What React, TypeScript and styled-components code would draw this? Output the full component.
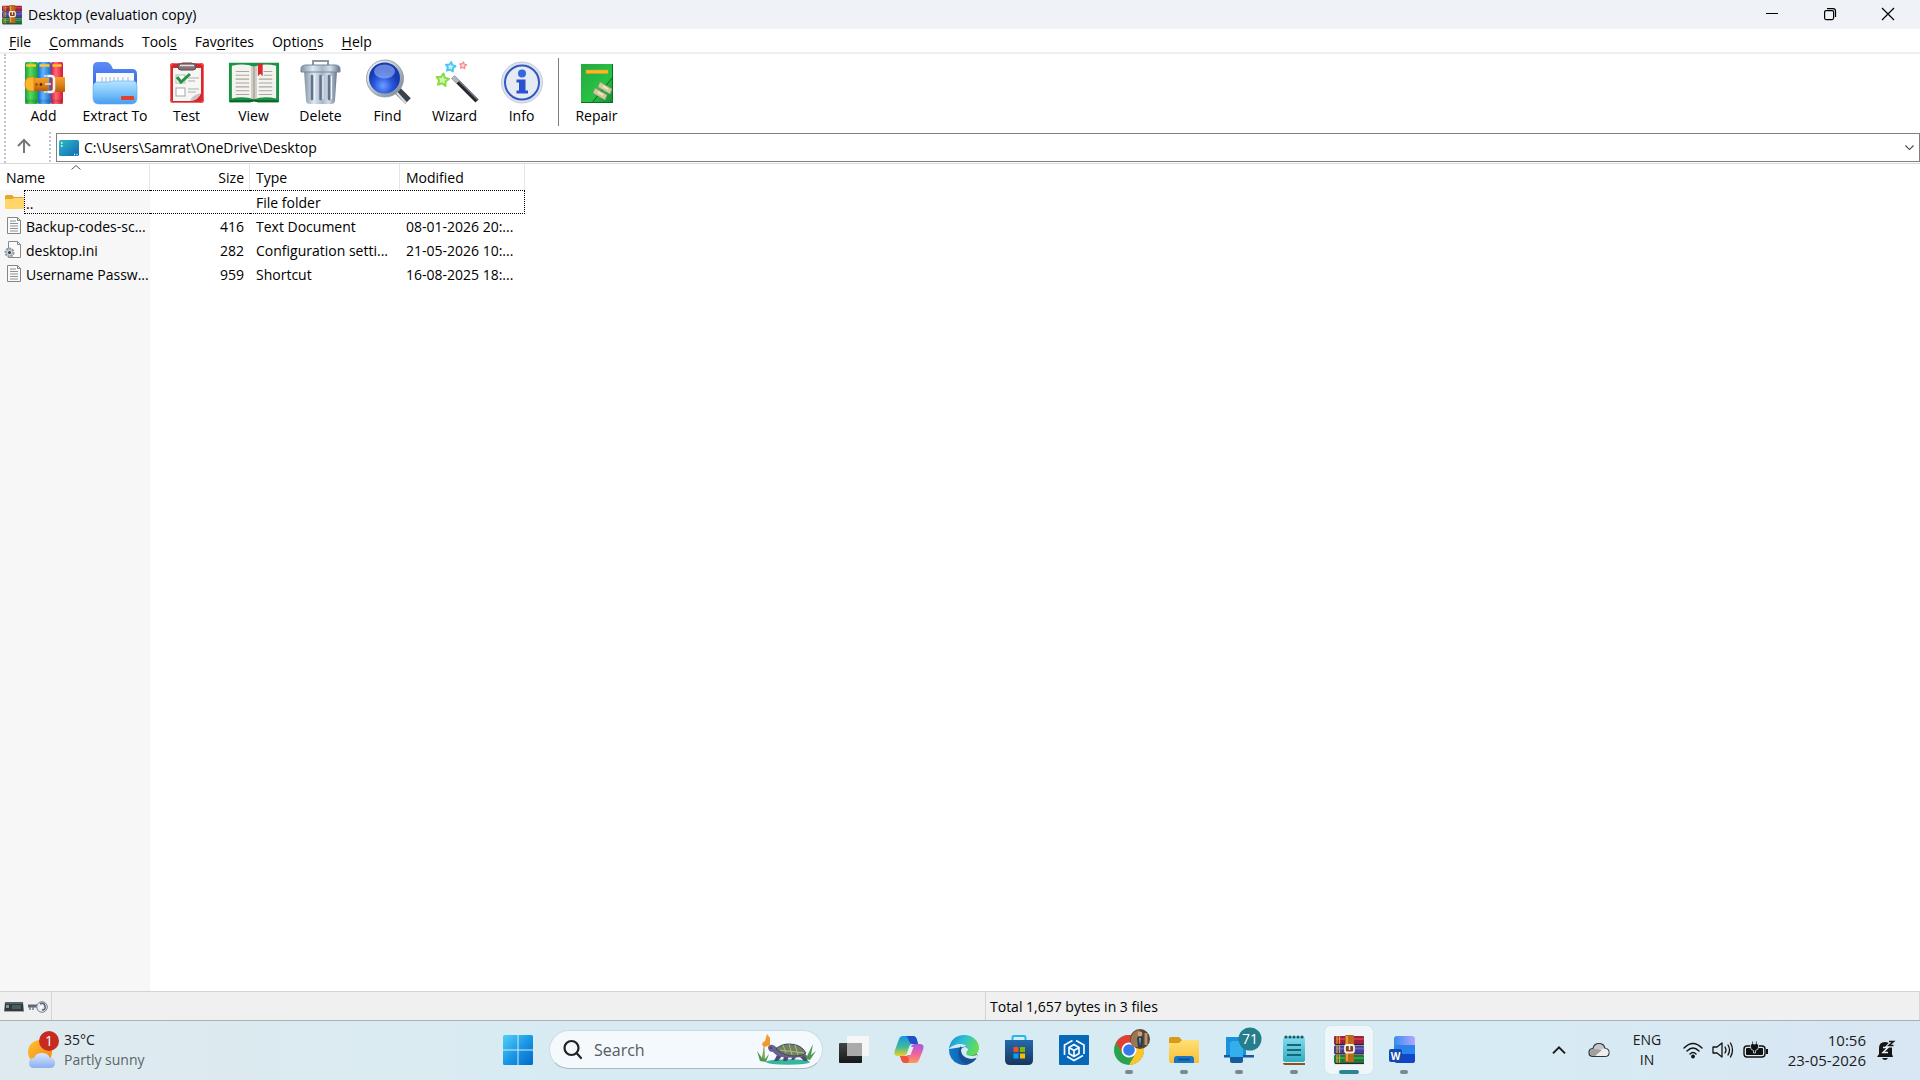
import React from "react";
import styled, { createGlobalStyle, css } from "styled-components";

const GlobalStyle = createGlobalStyle`
  *, *::before, *::after { box-sizing: border-box; }
  body { margin: 0; background: #fff; }
  body, button, input { font-family: "Open Sans", "Noto Sans", sans-serif; font-size: 14px; color: #000; }
  button { border: 0; padding: 0; margin: 0; background: none; }
  svg { display: block; flex: none; overflow: visible; }
`;

/* ---------- window frame ---------- */

const Desktop = styled.div`
  display: flex;
  flex-direction: column;
  height: 100vh;
  line-height: 20px;
`;

const TitleBar = styled.header`
  display: flex;
  align-items: center;
  height: 29px;
  padding-left: 2px;
  background: #eff3f8;
`;

const Title = styled.h1`
  flex: 1;
  margin: 0 0 0 6px;
  font-size: 14px;
  font-weight: 400;
`;

const CaptionButton = styled.button`
  display: grid;
  place-items: center;
  width: 58px;
  height: 28px;
`;

const Captions = styled.div`
  display: flex;
  align-self: flex-start;
  padding-right: 3px;
`;

const MenuBar = styled.nav`
  display: flex;
  height: 25px;
  border-bottom: 2px solid #f0f0f0;
`;

const MenuItem = styled.button`
  padding: 2px 9px 0;
  line-height: 21px;
  u { text-underline-offset: 2px; }
`;

/* ---------- toolbar ---------- */

const dottedGrip = css`
  border-left: 2px dotted #c4c4c4;
`;

const Bars = styled.div`
  display: flex;
  flex-direction: column;
  margin-left: 4px;
  ${dottedGrip}
`;

const Toolbar = styled.div`
  display: flex;
  align-items: stretch;
  height: 76px;
  padding-left: 4px;
`;

const ToolButton = styled.button<{ $wide?: boolean }>`
  display: flex;
  flex-direction: column;
  align-items: center;
  width: ${(p) => (p.$wide ? 76 : 67)}px;
  padding-top: 6px;
  line-height: 20px;
  white-space: nowrap;
`;

const ToolDivider = styled.span`
  width: 1px;
  margin: 4px 4px 4px 3px;
  background: #7d7d7d;
`;

const AddressRow = styled.div`
  display: flex;
  align-items: flex-end;
  height: 33px;
  padding-bottom: 1px;
`;

const UpButton = styled.button`
  display: grid;
  place-items: center;
  width: 36px;
  height: 32px;
`;

const AddressGrip = styled.span`
  height: 30px;
  margin: 0 5px 0 7px;
  ${dottedGrip}
`;

const AddressBox = styled.label`
  display: flex;
  flex: 1;
  align-items: center;
  height: 29px;
  padding: 0 5px 0 2px;
  border: 1px solid #808080;
  background: #fff;
`;

const AddressInput = styled.input`
  flex: 1;
  min-width: 0;
  margin-left: 5px;
  padding: 0;
  border: 0;
  outline: 0;
  background: none;
`;

const DropButton = styled.button`
  color: #444;
`;

/* ---------- file list ---------- */

const FileArea = styled.main`
  flex: 1;
  min-height: 0;
  border-top: 1px solid #d9d9d9;
  background: linear-gradient(to right, #f7f7f7 150px, #fff 150px);
`;

const FileTable = styled.table`
  width: 525px;
  table-layout: fixed;
  border-collapse: separate;
  border-spacing: 0;
`;

const HeadCell = styled.th<{ $right?: boolean; $width: number }>`
  position: relative;
  width: ${(p) => p.$width}px;
  height: 26px;
  padding: ${(p) => (p.$right ? "2px 5px 0" : "2px 6px 0")};
  border-right: 1px solid #e5e5e5;
  background: #fff;
  font-weight: 400;
  text-align: ${(p) => (p.$right ? "right" : "left")};
`;

const SortMark = styled.svg`
  position: absolute;
  left: 50%;
  top: 1px;
  margin-left: -4px;
`;

const Cell = styled.td<{ $right?: boolean; $focus?: boolean }>`
  height: 24px;
  padding: 2px 6px 0;
  text-align: ${(p) => (p.$right ? "right" : "left")};
  white-space: nowrap;
  ${(p) =>
    p.$focus &&
    css`
      border: 1px dotted #000;
      border-width: 1px 0;
      &:last-child { border-right-width: 1px; }
    `}
`;

const NameCell = styled.td`
  height: 24px;
  padding: 0 0 0 5px;
  white-space: nowrap;
`;

const NameWrap = styled.span`
  display: flex;
  align-items: center;
`;

const FileName = styled.span<{ $focus?: boolean }>`
  flex: 1;
  height: 24px;
  padding: 2px 0 0 2px;
  line-height: 22px;
  ${(p) =>
    p.$focus &&
    css`
      border: 1px dotted #000;
      border-right: 0;
      padding-left: 1px;
    `}
`;

const StatusBar = styled.footer`
  display: flex;
  height: 30px;
  border-top: 1px solid #d4d4d4;
  border-bottom: 1px solid #a9b1b5;
  background: #f0f0f0;
`;

const StatusIcons = styled.div`
  display: flex;
  align-items: center;
  gap: 4px;
  width: 52px;
  padding: 2px 0 0 4px;
  border-right: 1px solid #d4d4d4;
`;

const StatusCell = styled.div`
  flex: 1;
  padding-left: 4px;
  border-right: 1px solid #d4d4d4;
  line-height: 29px;
`;

/* ---------- taskbar ---------- */

const Taskbar = styled.footer`
  display: grid;
  grid-template-columns: 1fr auto 1fr;
  align-items: center;
  height: 59px;
  padding-bottom: 2px;
  background: linear-gradient(to right, #dfeaee, #d8ebf3 30%, #d7ebf4 80%, #d9e6f3);
`;

const Weather = styled.button`
  display: flex;
  align-items: center;
  gap: 5px;
  justify-self: start;
  padding-left: 26px;
  text-align: left;
  line-height: 20px;
`;

const WeatherText = styled.span`
  display: flex;
  flex-direction: column;
  color: #1b1b1b;
  span + span { color: #5c6468; }
`;

const Apps = styled.div`
  display: flex;
  align-items: center;
  gap: 7px;
  padding-left: 2px;
`;

const AppButton = styled.button<{ $state?: "running" | "active" }>`
  position: relative;
  display: grid;
  place-items: center;
  width: 48px;
  height: 48px;
  border-radius: 5px;
  ${(p) =>
    p.$state &&
    css`
      &::after {
        content: "";
        position: absolute;
        bottom: 0;
        left: 50%;
        width: ${p.$state === "active" ? 20 : 8}px;
        height: 4px;
        border-radius: 2px;
        background: ${p.$state === "active" ? "#2b8394" : "#7d878d"};
        transform: translateX(-50%);
      }
    `}
  ${(p) =>
    p.$state === "active" &&
    css`
      background: #eff6fa;
      box-shadow: 0 0 1px #a9bcc5;
    `}
`;

const SearchBox = styled.label`
  display: flex;
  align-items: center;
  width: 274px;
  height: 39px;
  padding: 0 6px 0 13px;
  border: 1px solid #cbdbe3;
  border-bottom-color: #aab8c0;
  border-radius: 20px;
  background: #f3f9fc;
`;

const SearchInput = styled.input`
  flex: 1;
  min-width: 0;
  margin-left: 11px;
  padding: 0;
  border: 0;
  outline: 0;
  background: none;
  font-size: 16px;
  &::placeholder { color: #555b5f; opacity: 1; }
`;

const Tray = styled.div`
  display: flex;
  align-items: center;
  justify-self: end;
  padding-right: 25px;
  color: #1b1b1b;
`;

const TrayButton = styled.button<{ $width: number }>`
  display: flex;
  align-items: center;
  justify-content: center;
  gap: 9px;
  width: ${(p) => p.$width}px;
  height: 40px;
  line-height: 20px;
  color: #1b1b1b;
`;

const Clock = styled.button`
  width: 89px;
  margin-right: 11px;
  text-align: right;
  font-size: 15px;
  line-height: 20px;
  color: #1b1b1b;
`;

/* ---------- toolbar drawings ---------- */

const AddIcon = () => (
  <svg width="42" height="46" viewBox="0 0 42 46">
    <defs>
      {[["ag", "#1c9b3f", "#55dc5b"], ["ab", "#1769cf", "#65b6ff"], ["ar", "#d51736", "#ff6b78"]].map(([id, a, b]) => (
        <linearGradient id={id} key={id}>
          <stop stopColor={a} /><stop offset=".4" stopColor={b} /><stop offset="1" stopColor={a} />
        </linearGradient>
      ))}
      <linearGradient id="abelt" x2="0" y2="1"><stop stopColor="#f5a02a" /><stop offset=".5" stopColor="#e0851c" /><stop offset="1" stopColor="#b75a08" /></linearGradient>
    </defs>
    <rect x="2" y="2" width="13" height="42" rx="1.500" fill="url(#ag)" />
    <rect x="15" y="2" width="13" height="42" rx="1.500" fill="url(#ab)" />
    <rect x="28" y="2" width="12" height="42" rx="1.500" fill="url(#ar)" />
    <path d="M3 5.500h10M16.500 5.500h10M29.500 5.500h9" stroke="#ffc928" strokeWidth="2.500" />
    <path d="M3 41h11M16 41h11M29 41h10" stroke="#0002" strokeWidth="3" />
    <path d="M8 18h18v13H8z" fill="url(#abelt)" />
    <path d="M11 17v14H7q-5-1-5-7t5-7z" fill="#ffb52b" stroke="#d98413" strokeWidth=".8" />
    <rect x="32" y="17" width="10" height="15" rx="1" fill="url(#abelt)" />
    <path d="M24 16h4q3 0 3 3v10q0 3-3 3h-4" fill="none" stroke="#f4f4f4" strokeWidth="2.500" />
    <path d="M21 16h4M21 32h4M22 24h6" stroke="#cfcfcf" strokeWidth="2" />
    <circle cx="18" cy="24.500" r="1.400" fill="#5d2b00" />
    <circle cx="13.500" cy="24.500" r="1.200" fill="#8b4a0a" />
  </svg>
);

const ExtractIcon = () => (
  <svg width="46" height="46" viewBox="0 0 46 46">
    <defs>
      <linearGradient id="eb" x2="0" y2="1"><stop stopColor="#5c8cf6" /><stop offset="1" stopColor="#245cdb" /></linearGradient>
      <linearGradient id="ef" x2="0" y2="1"><stop stopColor="#b5e5ff" /><stop offset=".5" stopColor="#7dc4fb" /><stop offset="1" stopColor="#479df0" /></linearGradient>
    </defs>
    <path d="M1 7q0-5 5-5h8q3 0 5 3l2 4h19q5 0 5 5v21H1z" fill="url(#eb)" />
    <rect x="4" y="13" width="38" height="16" fill="#f7fbff" />
    <path d="M10 17v6M14 17v6M18 17v6M22 17v6M26 17v6M31 17v6M36 17v6" stroke="#c3ced9" strokeWidth="1.500" />
    <path d="M1 27q0-5 5-5h10q3 0 5-1h20q4 0 4 4v13q0 6-6 6H7q-6 0-6-6z" fill="url(#ef)" stroke="#5aa9ee" strokeWidth=".6" />
    <rect x="29" y="36" width="13" height="4" rx="1" fill="#e2402f" />
  </svg>
);

const TestIcon = () => (
  <svg width="38" height="46" viewBox="0 0 38 46">
    <rect x="2" y="3" width="34" height="40" rx="3" fill="#d9262c" />
    <rect x="2.500" y="3.500" width="33" height="39" rx="3" fill="none" stroke="#ef6c68" />
    <path d="M5 8h28v25q-3 7-11 8H5z" fill="#f6f6f4" />
    <path d="M22 41q2-6 11-8-2 7-11 8z" fill="#c4c4c4" />
    <path d="M10 4h3l1-1h10l1 1h3v3q0 3-3 3H13q-3 0-3-3z" fill="#857276" stroke="#5f4246" />
    <path d="M12 5.500h14" stroke="#e8dfe0" strokeWidth="1.500" />
    <rect x="8" y="15" width="9" height="8" fill="#fff" stroke="#b5b5b5" />
    <rect x="8" y="28" width="9" height="8" fill="#fff" stroke="#a5a5a5" />
    <path d="M9 17l4 5 9-8" fill="none" stroke="#239443" strokeWidth="3" />
    <path d="M20 18h11M20 21h7M20 29h11M20 32h8" stroke="#adadad" />
  </svg>
);

const ViewIcon = () => (
  <svg width="52" height="46" viewBox="0 0 54 46">
    <path d="M1 2h52v41H31l-4-1-4 1H1z" fill="#189344" />
    <path d="M2 42h21l4-1 4 1h21" fill="none" stroke="#0a6329" strokeWidth="2" />
    <path d="M4 5q13-3 23 1 10-4 23-1v34q-13-3-23 1-10-4-23-1z" fill="#f5f3ef" />
    <path d="M24 5l3 1 3-1v34l-3 1-3-1z" fill="#aba7a0" opacity=".5" />
    <path d="M27 6v34" stroke="#887f75" strokeWidth=".8" />
    <path d="M8 11h14M8 15h14M8 19h14M8 23h14M8 27h14M8 31h14M8 35h14M32 19h14M32 23h14M32 27h14M32 31h14M32 35h14M37 11h9M37 15h9" stroke="#aaa6a2" strokeWidth="1.100" />
    <path d="M31 3h5v13l-2.500-2.500L31 16z" fill="#d52b2b" />
  </svg>
);

const DeleteIcon = () => (
  <svg width="42" height="46" viewBox="0 0 42 46">
    <defs><linearGradient id="db"><stop stopColor="#8291a4" /><stop offset=".3" stopColor="#dfe8f1" /><stop offset=".55" stopColor="#a7b7ca" /><stop offset=".75" stopColor="#d4dde7" /><stop offset="1" stopColor="#64758a" /></linearGradient></defs>
    <path d="M13 5V1h15v4" fill="none" stroke="#8d98a5" strokeWidth="2" />
    <path d="M4 11h33l-2 29q0 4-4 4H10q-4 0-4-4z" fill="url(#db)" />
    <path d="M12 16v23M20.500 16v23M29 16v23" stroke="#60758c" strokeWidth="2.500" strokeLinecap="round" />
    <path d="M14.500 16v23M23 16v23M31.500 16v23" stroke="#f2f6fa" />
    <path d="M1 9q0-4 5-4h29q5 0 5 4v3H1z" fill="url(#db)" stroke="#77879a" />
  </svg>
);

const FindIcon = () => (
  <svg width="46" height="46" viewBox="0 0 46 46">
    <defs>
      <radialGradient id="fi" cx=".45" cy=".75"><stop stopColor="#6e9dff" /><stop offset=".6" stopColor="#2857dd" /><stop offset="1" stopColor="#163bb0" /></radialGradient>
      <linearGradient id="fr" x2="1" y2="1"><stop stopColor="#fff" /><stop offset="1" stopColor="#73808f" /></linearGradient>
    </defs>
    <path d="M32 30l11 11" stroke="#3c4048" strokeWidth="8" />
    <path d="M31 32l10 11" stroke="#d6dce2" strokeWidth="2.500" />
    <circle cx="20" cy="18.500" r="18.500" fill="url(#fr)" stroke="#8490a0" strokeWidth=".8" />
    <circle cx="19.500" cy="18" r="15.500" fill="url(#fi)" />
    <ellipse cx="19.500" cy="11.500" rx="10.500" ry="7" fill="#a9c5ff" opacity=".55" />
  </svg>
);

const star = (cx: number, cy: number, r: number) =>
  Array.from({ length: 10 }, (_, i) => {
    const a = (i * Math.PI) / 5 - Math.PI / 2 + 0.15;
    const d = i % 2 ? r * 0.5 : r;
    return `${(cx + d * Math.cos(a)).toFixed(1)},${(cy + d * Math.sin(a)).toFixed(1)}`;
  }).join(" ");

const WizardIcon = () => (
  <svg width="46" height="46" viewBox="0 0 46 46">
    <g strokeLinejoin="round">
      <polygon points={star(10.5, 20, 6.6)} fill="#d4f7ae" stroke="#86dd48" strokeWidth="2" />
      <polygon points={star(18.5, 7, 5.2)} fill="#c4f4ff" stroke="#4cc5f2" strokeWidth="1.800" />
      <polygon points={star(31, 5.5, 3.6)} fill="#ffd9d9" stroke="#f58a8e" strokeWidth="1.200" />
    </g>
    <path d="M21 17l24 24" stroke="#25282d" strokeWidth="4.500" />
    <path d="M22.500 16.500l23 23" stroke="#7b7f86" strokeWidth="1.200" />
    <path d="M21 17l5 5" stroke="#b4b7bb" strokeWidth="4.500" />
  </svg>
);

const InfoIcon = () => (
  <svg width="44" height="46" viewBox="0 0 44 46">
    <circle cx="22" cy="22.500" r="20.500" fill="#dde3ec" stroke="#c3cbd7" />
    <circle cx="22" cy="22.500" r="17" fill="#e6ebf3" stroke="#3159c3" strokeWidth="2" />
    <circle cx="22" cy="13.500" r="4" fill="#3268df" />
    <path d="M16.500 19.500h9v11h2.500v3H16.500v-3H19v-8h-2.500z" fill="#2953cc" />
  </svg>
);

const RepairIcon = () => (
  <svg width="34" height="46" viewBox="0 0 34 46">
    <defs><linearGradient id="rp" x2="1" y2="1"><stop stopColor="#24a943" /><stop offset=".6" stopColor="#27c243" /><stop offset="1" stopColor="#128a31" /></linearGradient></defs>
    <rect x="1" y="4" width="32" height="39" fill="url(#rp)" />
    <path d="M32.500 4v39M1 42.500h32" stroke="#087023" />
    <rect x="6" y="10" width="22" height="3.500" fill="#f7b92c" stroke="#d99c16" strokeWidth=".6" />
    <path d="M33 17L12 43" stroke="#086525" />
    <path d="M20 22l12 7-2 5-12-7zM15 28l12 7-2 5-12-7z" fill="#d6c8a4" stroke="#a0926f" strokeWidth=".8" strokeDasharray="2 1" />
    <path d="M23 26l5 3M18 32l5 3" stroke="#f1e7c9" strokeWidth="2" />
  </svg>
);

/* ---------- small drawings ---------- */

const RarLogo = ({ size }: { size: number }) => (
  <svg width={size} height={size} viewBox="0 0 30 30">
    {[["#a02040", "#c93a4e", 1], ["#43409c", "#6a60c4", 10.5], ["#1b7a38", "#36a249", 20]].map(([dark, light, y]) => (
      <g key={String(y)}>
        <rect x="0" y={Number(y)} width="30" height="8.500" rx="1" fill={String(dark)} />
        <path d={`M2 ${Number(y) + 3}h28`} stroke={String(light)} strokeWidth="2" />
        <path d={`M3 ${y}v8M5.500 ${y}v8`} stroke="#d9a52d" strokeWidth="1.200" />
        <path d={`M1 ${Number(y) + 8.5}h29`} stroke="#38232d" strokeWidth="1.200" />
      </g>
    ))}
    <rect x="11" y="0" width="9" height="27" rx="1" fill="#b9681c" />
    <path d="M13 1v25" stroke="#e79c35" strokeWidth="2" />
    <rect x="11" y="10" width="9" height="7.500" rx="2" fill="#834018" stroke="#f4eee4" strokeWidth="1.800" />
    <path d="M15.500 10v5" stroke="#eee" strokeWidth="1.500" />
  </svg>
);

const FolderIcon = () => (
  <svg width="19" height="16" viewBox="0 0 19 16">
    <path d="M0 2.500Q0 1 1.500 1H7l2 2h8.500Q19 3 19 4.500V8H0z" fill="#e5a52a" />
    <path d="M0 6q0-1 1-1h6l2-1h9q1 0 1 1v9q0 1-1 1H1q-1 0-1-1z" fill="#ffd667" />
  </svg>
);

const DocIcon = () => (
  <svg width="19" height="20" viewBox="0 0 19 20">
    <path d="M2.500 1.500h10l3 3v13h-13z" fill="#f9f9f9" stroke="#858585" />
    <path d="M12.500 1.500v3h3" fill="none" stroke="#858585" />
    <path d="M5 5h6M5 7.500h8M5 10h8M5 12.500h8M5 15h8" stroke="#8d9499" />
  </svg>
);

const IniIcon = () => (
  <svg width="19" height="20" viewBox="0 0 19 20">
    <path d="M3.500 1.500h9l3 3v13h-12z" fill="#fafafa" stroke="#8a8a8a" />
    <path d="M12.500 1.500v3h3" fill="none" stroke="#8a8a8a" />
    <circle cx="4.500" cy="12.500" r="4" fill="#c9d1d6" stroke="#8c969d" strokeWidth="2" strokeDasharray="2 1" />
    <circle cx="4.500" cy="12.500" r="1.500" fill="#333f49" />
  </svg>
);

const DesktopIcon = () => (
  <svg width="20" height="16" viewBox="0 0 20 16">
    <defs><linearGradient id="dk" x2="1" y2="1"><stop stopColor="#29bcc9" /><stop offset="1" stopColor="#1268b4" /></linearGradient></defs>
    <rect width="20" height="16" rx="1.500" fill="url(#dk)" />
    <path d="M2 3h1.500M2 6h1.500M15 14.500h1M17.500 14.500h1" stroke="#fff" strokeWidth="1.500" />
  </svg>
);

const DriveIcon = () => (
  <svg width="20" height="10" viewBox="0 0 20 10">
    <path d="M1 0h18l1 9.500H0z" fill="#59636b" />
    <rect x="1" y="2" width="18" height="7" fill="#303a3f" />
    <rect x="2" y="3" width="3" height="3" fill="#819394" /><path d="M8 3h9v4H8z" fill="#4a5b5d" />
  </svg>
);

const KeyIcon = () => (
  <svg width="20" height="12" viewBox="0 0 20 12">
    <path d="M0 5h10" stroke="#5e6870" strokeWidth="3" /><path d="M2 6v3M5 6v3" stroke="#778088" strokeWidth="1.500" />
    <circle cx="14" cy="6" r="5.300" fill="#e5eaf2" stroke="#75818d" />
    <path d="M12 3q4-2 5 2t-3 4" fill="none" stroke="#53606c" strokeWidth="1.500" />
    <circle cx="13" cy="6" r="1.500" fill="#fff" />
  </svg>
);

const WeatherIcon = () => (
  <svg width="33" height="38" viewBox="0 0 33 38">
    <defs>
      <linearGradient id="sun" x2="1" y2="1"><stop stopColor="#ffc22c" /><stop offset="1" stopColor="#f2831c" /></linearGradient>
      <linearGradient id="wcl" x2="0" y2="1"><stop stopColor="#dbe8ff" /><stop offset="1" stopColor="#8baef0" /></linearGradient>
    </defs>
    <circle cx="14" cy="21" r="12" fill="url(#sun)" />
    <path d="M8 37q-5 0-5-5t5-5q2-5 8-5t8 5q5 0 5 5t-5 5z" fill="url(#wcl)" />
    <circle cx="23" cy="10" r="10" fill="#c62a20" />
    <text x="23" y="15" textAnchor="middle" fontSize="14" fill="#fff">1</text>
  </svg>
);

const Turtle = () => (
  <svg width="60" height="32" viewBox="0 0 60 32">
    <ellipse cx="32" cy="28" rx="22" ry="2.800" fill="#35b79e" />
    <path d="M4 27L1 17l5 7 2-12 1 13 4-5-3 8zM50 25l-3-8 4 5 6-12-2 11 5-4-6 9z" fill="#4f9850" />
    <path d="M22 19l-4 8h4l4-5zM28 22l-1 5h4l2-5zM42 21l6 6h4l-4-7zM37 22l-2 4h3l3-4z" fill="#4e4a72" />
    <path d="M12 13q1-3 5-2l8 5 22 4 4 2q-12 3-25 1-6-1-9-5-5 0-5-5z" fill="#696290" />
    <path d="M20 15q5-5 13-5 12 0 17 9-3 3-12 3-10 0-18-7z" fill="#6f8361" stroke="#3f4a5a" />
    <path d="M27 11l3 8M33 10l3 11M39 11l3 10M24 16l24 3" stroke="#b9bd83" strokeWidth=".9" />
    <path d="M6 11q0-3 3-4l2-7 3 4v7l-5 2z" fill="#f29a2e" /><path d="M8 11v14" stroke="#c3a56a" /><circle cx="15" cy="14" r=".8" fill="#222" />
  </svg>
);

const SearchIcon = () => (
  <svg width="20" height="20" viewBox="0 0 20 20" fill="none" stroke="#222" strokeWidth="2.200" strokeLinecap="round"><circle cx="8.500" cy="8" r="7" /><path d="M13.500 13l4.500 5" /></svg>
);

const StartIcon = () => (
  <svg width="30" height="30" viewBox="0 0 30 30">
    <defs><linearGradient id="st" x1="0" y1="0" x2="30" y2="30" gradientUnits="userSpaceOnUse"><stop stopColor="#54d0fb" /><stop offset=".5" stopColor="#1b98e5" /><stop offset="1" stopColor="#006bc9" /></linearGradient></defs>
    <path d="M1.500 0H14.500V14.500H0V1.500Q0 0 1.500 0M15.500 0h13Q30 0 30 1.500v13H15.500zM0 15.500h14.500V30h-13Q0 30 0 28.500zM15.500 15.500H30v13q0 1.500-1.500 1.500h-13z" fill="url(#st)" />
  </svg>
);

const TaskViewIcon = () => (
  <svg width="30" height="30" viewBox="0 0 30 30">
    <defs><linearGradient id="tv" x2="0" y2="1"><stop stopColor="#444" /><stop offset="1" stopColor="#171717" /></linearGradient></defs>
    <rect x="0" y="8" width="23" height="20" rx="1" fill="url(#tv)" />
    <rect x="8" y="1" width="22" height="20" rx="1" fill="#f6f6f6" />
    <path d="M8 8h15v13H8z" fill="#aaa" />
  </svg>
);

const CopilotIcon = () => (
  <svg width="30" height="30" viewBox="0 0 30 30">
    <defs>
      <linearGradient id="cpa" x2="0" y2="1"><stop stopColor="#1695e8" /><stop offset=".55" stopColor="#42b99a" /><stop offset="1" stopColor="#f0cf27" /></linearGradient>
      <linearGradient id="cpb" x2="0" y2="1"><stop stopColor="#a55bdd" /><stop offset=".5" stopColor="#ec62a2" /><stop offset="1" stopColor="#ff9a54" /></linearGradient>
    </defs>
    <path d="M9 1h10q3 0 4 4l1 4h-6q-2 0-3 3l-2 6q-1 3-4 3H4q-5 0-3-6l4-11q1-3 4-3z" fill="url(#cpa)" />
    <path d="M16 1h3q3 0 4 4l1 4h-6q-2 0-3-3-1-4-3-5z" fill="#214ec7" />
    <path d="M21 28H11q-3 0-4-4l-1-3h6q2 0 3-3l2-6q1-3 4-3h5q5 0 3 6l-4 10q-1 3-4 3z" fill="url(#cpb)" />
    <path d="M14 28h-3q-3 0-4-4l-1-3h6q2 0 3 3 0 3-1 4z" fill="#ee553a" />
    <path d="M16.500 12h3l-3 8h-4z" fill="#e6f1f6" />
  </svg>
);

const EdgeIcon = () => (
  <svg width="30" height="30" viewBox="0 0 30 30">
    <defs>
      <linearGradient id="ed" x2="1" y2=".4"><stop stopColor="#168ad8" /><stop offset=".5" stopColor="#2cc0d4" /><stop offset="1" stopColor="#66dc55" /></linearGradient>
      <linearGradient id="ee" x2="1"><stop stopColor="#107bd0" /><stop offset="1" stopColor="#124b8c" /></linearGradient>
    </defs>
    <path d="M0 14A15 15 0 0 0 27 24l2-4-9-9z" fill="url(#ee)" />
    <path d="M0 14C1 5 7 0 15 0c9 0 15 6 15 13 0 5-4 8-9 8-4 0-5-2-4-4 3-4 0-8-5-8C7 9 2 11 0 14z" fill="url(#ed)" />
    <path d="M12 15c1-4 7-4 7 0-3 3-2 6 3 6 3 0 5-1 7-2l-1 4c-7 3-16-1-16-8z" fill="#d8ebf3" />
    <path d="M12 11c-5 5-3 16 6 18 5-1 8-3 9-6-8 3-15-1-15-7z" fill="#174f94" />
  </svg>
);

const StoreIcon = () => (
  <svg width="30" height="30" viewBox="0 0 30 30">
    <defs><linearGradient id="so" x2="0" y2="1"><stop stopColor="#2469ad" /><stop offset="1" stopColor="#18365d" /></linearGradient></defs>
    <path d="M8.500 6V2.500Q8.500 1 10 1h10q1.500 0 1.500 1.500V6" fill="none" stroke="#20b9e8" strokeWidth="2" />
    <path d="M1 5h28v20q0 5-5 5H6q-5 0-5-5z" fill="url(#so)" />
    <path d="M9.500 12h5v5h-5z" fill="#f25022" /><path d="M16 12h5v5h-5z" fill="#7fba00" /><path d="M9.500 18.500h5v5h-5z" fill="#00a4ef" /><path d="M16 18.500h5v5h-5z" fill="#ffb900" />
  </svg>
);

const CubeIcon = () => (
  <svg width="30" height="30" viewBox="0 0 30 30">
    <rect width="30" height="30" rx="1" fill="#0767b9" />
    <g fill="none" stroke="#f3faff" strokeWidth="1.700"><path d="M5.500 20V10l8-4.500M17 5.500l8 4.500v9M24 20.500l-9 5-7-4" /><path d="M15 9.500l5 3v6l-5 3-5-3v-6zM10 12.500l5 3 5-3M15 15.500v6" /></g>
  </svg>
);

const ChromeIcon = () => (
  <svg width="30" height="30" viewBox="0 6 30 30">
    <circle cx="15" cy="21" r="15" fill="#2ca24c" />
    <path d="M2 13.500A15 15 0 0 1 28 13.500H15L8.500 24z" fill="#e43e32" />
    <path d="M28 13.500A15 15 0 0 1 15 36l6.500-11.500L21.500 13.500z" fill="#fbc62b" />
    <circle cx="15" cy="21" r="7.500" fill="#fff" /><circle cx="15" cy="21" r="5.800" fill="#3779e9" />
    <circle cx="26" cy="10" r="10" fill="#594331" />
    <path d="M18 6q3-5 8-5v17h-7q-4-7-1-12z" fill="#9b7650" /><path d="M32 4v12" stroke="#b7936f" strokeWidth="3" />
    <path d="M23 9q3-4 6 0l-1 9h-4z" fill="#273b4e" /><path d="M25 9h2l-1 8z" fill="#79aebd" /><circle cx="26" cy="5" r="2.400" fill="#d0a078" />
  </svg>
);

const ExplorerIcon = () => (
  <svg width="30" height="30" viewBox="0 0 30 30">
    <defs><linearGradient id="ex" x2="0" y2="1"><stop stopColor="#ffe076" /><stop offset="1" stopColor="#f9bf33" /></linearGradient></defs>
    <path d="M0 4q0-2 2-2h8l3 3h15q2 0 2 2v5H0z" fill="#d99b15" />
    <path d="M0 8h10l3-3h17v23H2q-2 0-2-2z" fill="url(#ex)" />
    <path d="M5 28v-4q0-3 3-3h14q3 0 3 3v4z" fill="#1976c6" /><path d="M10 24.500h10" stroke="#0d4e92" strokeWidth="2" strokeLinecap="round" />
  </svg>
);

const PhoneIcon = () => (
  <svg width="30" height="30" viewBox="0 0 30 30">
    <path d="M2 2h20v18H2z" fill="#1a91dc" /><path d="M0 20h30v2.500H0z" fill="#0e5da5" />
    <path d="M6 6h13v20q0 2-2 2H8q-2 0-2-2z" fill="#155b9f" /><path d="M6 8q0-2 2-2h9q2 0 2 2v14H6z" fill="#35aeee" />
    <circle cx="26" cy="4" r="11.500" fill="#247e8b" />
    <text x="26" y="9" textAnchor="middle" fontSize="14" fill="#fff">71</text>
  </svg>
);

const NotepadIcon = () => (
  <svg width="24" height="32" viewBox="0 0 24 32">
    <defs><linearGradient id="np" x2="0" y2="1"><stop stopColor="#82dcee" /><stop offset="1" stopColor="#34abc5" /></linearGradient></defs>
    <path d="M1 28h22v3H3q-2 0-2-2z" fill="#87551e" /><path d="M1 27h22v2H1z" fill="#eee" />
    <rect x="1" y="3" width="22" height="25" rx="2" fill="url(#np)" />
    <path d="M5 11h14M5 16h14M5 21h14" stroke="#196776" strokeWidth="2" />
    {[4, 8, 12, 16, 20].map((x) => <circle key={x} cx={x} cy="3" r="1.600" fill="#185b6b" />)}
  </svg>
);

const WordIcon = () => (
  <svg width="30" height="30" viewBox="0 0 30 30">
    <defs><linearGradient id="wo" x2="1"><stop stopColor="#388bed" /><stop offset="1" stopColor="#b7a6ff" /></linearGradient></defs>
    <rect x="5" y="1" width="21" height="14" rx="3" fill="url(#wo)" />
    <path d="M5 12q0-2 3-2h18v9H5z" fill="#2b83ed" /><path d="M5 19h21v7q0 2-2 2H8q-3 0-3-3z" fill="#1246c8" />
    <rect x="0" y="14" width="13" height="13" rx="2" fill="#134aae" />
    <text x="6.500" y="24.500" textAnchor="middle" fontSize="10" fontWeight="700" fill="#fff">W</text>
  </svg>
);

const WifiIcon = () => (
  <svg width="20" height="18" viewBox="0 0 20 18" fill="none" stroke="#111" strokeWidth="1.400" strokeLinecap="round"><path d="M1 7q9-9 18 0M4 10q6-6 12 0M7 13q3-3 6 0" /><circle cx="10" cy="15.500" r="1.200" fill="#111" /></svg>
);
const VolumeIcon = () => (
  <svg width="22" height="18" viewBox="0 0 22 18" fill="none" stroke="#111" strokeWidth="1.300" strokeLinecap="round" strokeLinejoin="round"><path d="M1 6h4l5-4v14l-5-4H1zM13 6q2 3 0 6M16 4q3 5 0 10M18.500 2q4 7 0 14" /></svg>
);
const BatteryIcon = () => (
  <svg width="26" height="18" viewBox="0 0 26 18">
    <rect x="1" y="5" width="21" height="11" rx="3" fill="none" stroke="#111" strokeWidth="1.400" /><rect x="3" y="7" width="17" height="7" rx="1" fill="#111" /><path d="M24 8v5" stroke="#111" strokeWidth="2" />
    <path d="M9 0v3H7.500v3q0 3 3 3.500V12h2V9.500q3-.500 3-3.500V3H14V0h-1.500v3h-2V0z" fill="#111" stroke="#d7ebf4" strokeWidth=".8" />
  </svg>
);
const CloudIcon = () => (
  <svg width="22" height="16" viewBox="0 0 22 16"><path d="M5 14.500q-4 0-4-4t4-4q1-5 6-5t6 5q4 0 4 4t-4 4z" fill="#c7c7c7" stroke="#333" strokeWidth="1.200" /><path d="M7 14q0-5 7-7 3-1 4 0 3 1 2.500 4T17 14z" fill="#eee" /><path d="M2 12q0-5 3-5t9 1l-7 6H4z" fill="#a0a0a0" /></svg>
);
const BellIcon = () => (
  <svg width="18" height="20" viewBox="0 0 18 20"><path d="M2 14V8q0-6 6-6t7 6v6l1 3H0zM5 18h6q-1 2-3 2t-3-2z" fill="#161616" /><path d="M12 1h4l-4 4.500h4" fill="none" stroke="#d7ebf4" strokeWidth="4" /><path d="M12 1.500h4.500l-4.500 4h4.500" fill="none" stroke="#161616" strokeWidth="1.600" /><path d="M6 7.500h5l-5 5h5" fill="none" stroke="#e7f2f7" strokeWidth="1.500" /></svg>
);
const Chevron = ({ up, size = 9, width = 1.2 }: { up?: boolean; size?: number; width?: number }) => (
  <svg width={size} height={size / 2 + 1} viewBox="0 0 10 6" fill="none" stroke="currentColor" strokeWidth={width}><path d={up ? "M.500 5.500L5 1l4.500 4.500" : "M.500.500L5 5 9.500.500"} /></svg>
);

/* ---------- data ---------- */

const menus: [string, string, string][] = [
  ["", "F", "ile"], ["", "C", "ommands"], ["Tool", "s", ""], ["Fav", "o", "rites"], ["Optio", "n", "s"], ["", "H", "elp"],
];

const tools: [string, () => React.JSX.Element][] = [
  ["Add", AddIcon], ["Extract To", ExtractIcon], ["Test", TestIcon], ["View", ViewIcon],
  ["Delete", DeleteIcon], ["Find", FindIcon], ["Wizard", WizardIcon], ["Info", InfoIcon],
];

const files = [
  { icon: FolderIcon, name: "..", size: "", type: "File folder", modified: "", focus: true },
  { icon: DocIcon, name: "Backup-codes-sc...", size: "416", type: "Text Document", modified: "08-01-2026 20:..." },
  { icon: IniIcon, name: "desktop.ini", size: "282", type: "Configuration setti...", modified: "21-05-2026 10:..." },
  { icon: DocIcon, name: "Username Passw...", size: "959", type: "Shortcut", modified: "16-08-2025 18:..." },
];

const pinned: [string, React.ReactNode, ("running" | "active")?][] = [
  ["Task view", <TaskViewIcon />], ["Copilot", <CopilotIcon />], ["Edge", <EdgeIcon />], ["Store", <StoreIcon />],
  ["Packages", <CubeIcon />], ["Chrome", <ChromeIcon />, "running"], ["File Explorer", <ExplorerIcon />, "running"],
  ["Phone Link", <PhoneIcon />, "running"], ["Notepad", <NotepadIcon />, "running"], ["WinRAR", <RarLogo size={30} />, "active"],
  ["Word", <WordIcon />, "running"],
];

export default function App() {
  return (
    <Desktop>
      <GlobalStyle />
      <TitleBar>
        <RarLogo size={20} />
        <Title>Desktop (evaluation copy)</Title>
        <Captions>
          <CaptionButton aria-label="Minimize"><svg width="12" height="12" stroke="#000"><path d="M0 5.500h12" /></svg></CaptionButton>
          <CaptionButton aria-label="Restore"><svg width="12" height="12" fill="none" stroke="#000" strokeWidth="1.200"><rect x=".600" y="2.600" width="9" height="9" rx="1.500" /><path d="M3 .600h6q2.500 0 2.500 2.500V9" /></svg></CaptionButton>
          <CaptionButton aria-label="Close"><svg width="12" height="12" stroke="#000" strokeWidth="1.200"><path d="M0 0l12 12M12 0L0 12" /></svg></CaptionButton>
        </Captions>
      </TitleBar>
      <MenuBar aria-label="Main menu">
        {menus.map(([a, key, b]) => <MenuItem key={a + key + b}>{a}<u>{key}</u>{b}</MenuItem>)}
      </MenuBar>
      <Bars>
        <Toolbar role="toolbar">
          {tools.map(([label, Icon]) => <ToolButton key={label} $wide={label === "Extract To"}><Icon />{label}</ToolButton>)}
          <ToolDivider />
          <ToolButton><RepairIcon />Repair</ToolButton>
        </Toolbar>
        <AddressRow>
          <UpButton aria-label="Up one level"><svg width="14" height="14" fill="none" stroke="#777" strokeWidth="2"><path d="M7 14V1M1 7l6-6 6 6" /></svg></UpButton>
          <AddressGrip />
          <AddressBox>
            <DesktopIcon />
            <AddressInput aria-label="Address" defaultValue="C:\Users\Samrat\OneDrive\Desktop" />
            <DropButton aria-label="Show recent folders"><Chevron /></DropButton>
          </AddressBox>
        </AddressRow>
      </Bars>
      <FileArea>
        <FileTable>
          <thead>
            <tr>
              <HeadCell $width={150}>Name<SortMark width="10" height="5" fill="none" stroke="#555"><path d="M.500 4.500l4.500-4 4.500 4" /></SortMark></HeadCell>
              <HeadCell $width={100} $right>Size</HeadCell>
              <HeadCell $width={150}>Type</HeadCell>
              <HeadCell $width={125}>Modified</HeadCell>
            </tr>
          </thead>
          <tbody>
            {files.map((f) => (
              <tr key={f.name}>
                <NameCell><NameWrap><f.icon /><FileName $focus={f.focus}>{f.name}</FileName></NameWrap></NameCell>
                <Cell $right $focus={f.focus}>{f.size}</Cell>
                <Cell $focus={f.focus}>{f.type}</Cell>
                <Cell $focus={f.focus}>{f.modified}</Cell>
              </tr>
            ))}
          </tbody>
        </FileTable>
      </FileArea>
      <StatusBar>
        <StatusIcons><DriveIcon /><KeyIcon /></StatusIcons>
        <StatusCell />
        <StatusCell>Total 1,657 bytes in 3 files</StatusCell>
      </StatusBar>
      <Taskbar>
        <Weather><WeatherIcon /><WeatherText><span>35°C</span><span>Partly sunny</span></WeatherText></Weather>
        <Apps>
          <AppButton aria-label="Start"><StartIcon /></AppButton>
          <SearchBox><SearchIcon /><SearchInput aria-label="Search" placeholder="Search" /><Turtle /></SearchBox>
          {pinned.map(([name, icon, state]) => <AppButton key={name} aria-label={name} $state={state}>{icon}</AppButton>)}
        </Apps>
        <Tray>
          <TrayButton $width={40} aria-label="Hidden icons"><Chevron up size={14} width={1.5} /></TrayButton>
          <TrayButton $width={40} aria-label="OneDrive"><CloudIcon /></TrayButton>
          <TrayButton $width={56}>ENG<br />IN</TrayButton>
          <TrayButton $width={102} aria-label="Network, volume, battery"><WifiIcon /><VolumeIcon /><BatteryIcon /></TrayButton>
          <Clock>10:56<br />23-05-2026</Clock>
          <button aria-label="Notifications"><BellIcon /></button>
        </Tray>
      </Taskbar>
    </Desktop>
  );
}
